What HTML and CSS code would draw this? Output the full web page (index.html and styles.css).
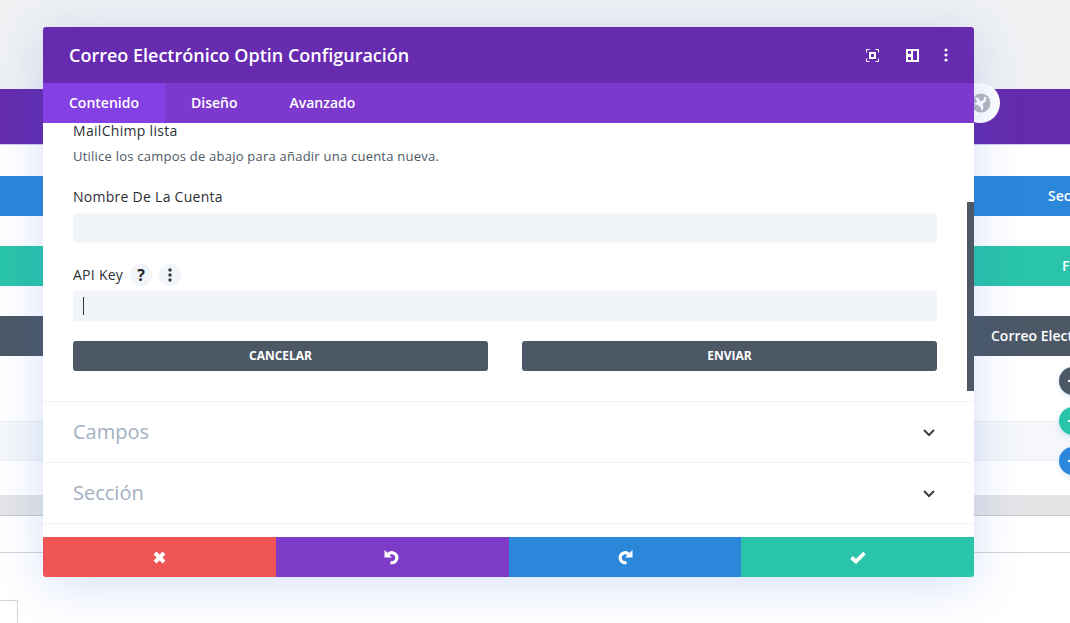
FILE: index.html
```html
<!DOCTYPE html>
<html lang="es">
<head>
  <meta charset="UTF-8" />
  <meta name="viewport" content="width=device-width, initial-scale=1.0" />
  <title>Correo Electrónico Optin Configuración</title>
  <link rel="stylesheet" href="styles.css">
</head>
<body>
  <!-- builder page behind the modal -->
  <div class="page">
    <div class="page-top"></div>
    <div class="bar bar-purple"></div>
    <div class="bar bar-blue">Sección</div>
    <div class="bar bar-teal">Fila</div>
    <div class="bar bar-dark">Correo Electrónico Optin</div>
    <div class="page-rows">
      <div class="page-band"></div>
    </div>
    <div class="page-foot"></div>
    <div class="page-white"></div>
    <div class="page-box"></div>
  </div>

  <div class="globe-btn">
    <svg width="20" height="20" viewBox="0 0 20 20">
      <circle cx="10" cy="10" r="9.500" fill="#b8b8be" />
      <path d="M4 3.500l4 2 1.500 3 3-1.500 1-3.500 2 1-1 4-3 2.500 1 4-2 3-1-4-3-2-3.500-1 3-2z" fill="#fff" />
    </svg>
  </div>
  <div class="page-dot dot-dark"></div>
  <div class="page-dot dot-teal"></div>
  <div class="page-dot dot-blue"></div>

  <div class="modal">
    <header class="modal-head">
      <h2>Correo Electrónico Optin Configuración</h2>
      <div class="head-icons">
        <svg class="icon-focus" width="13" height="13" viewBox="0 0 13 13" fill="none" stroke="#fff">
          <path d="M.5 3.500V.5h3M9.500 .5h3v3M12.500 9.500v3h-3M3.500 12.500h-3v-3" />
          <rect x="4" y="4" width="5" height="5" stroke-width="2" />
        </svg>
        <svg class="icon-side" width="13" height="13" viewBox="0 0 13 13">
          <path fill="#fff" fill-rule="evenodd" d="M0 0h13v13H0zM2 2v3h3V2zM2 8v3h3V8zM7 2v9h4V2z" />
        </svg>
        <svg class="icon-more" width="4" height="14" viewBox="0 0 4 14" fill="#fff">
          <circle cx="2" cy="2" r="1.600" />
          <circle cx="2" cy="7" r="1.600" />
          <circle cx="2" cy="12" r="1.600" />
        </svg>
      </div>
    </header>

    <nav class="tabs">
      <a class="tab active">Contenido</a>
      <a class="tab">Diseño</a>
      <a class="tab">Avanzado</a>
    </nav>

    <div class="modal-body">
      <div class="scrollbar"></div>
      <div class="account-form">
        <div class="field-title">MailChimp lista</div>
        <p class="field-desc">Utilice los campos de abajo para añadir una cuenta nueva.</p>

        <label class="field-label">Nombre De La Cuenta</label>
        <div class="text-field"></div>

        <div class="api-label">
          <label class="field-label">API Key</label>
          <span class="mini-btn">?</span>
          <span class="mini-btn">
            <svg width="4" height="14" viewBox="0 0 4 14" fill="#32373c">
              <circle cx="2" cy="2" r="1.700" />
              <circle cx="2" cy="7" r="1.700" />
              <circle cx="2" cy="12" r="1.700" />
            </svg>
          </span>
        </div>
        <div class="text-field"><span class="caret"></span></div>

        <div class="form-buttons">
          <button type="button">CANCELAR</button>
          <button type="button">ENVIAR</button>
        </div>
      </div>

      <div class="toggle">
        <span>Campos</span>
        <svg width="12" height="8" viewBox="0 0 12 8" fill="none" stroke="#3a4048" stroke-width="2"><path d="M1 1l5 5 5-5" /></svg>
      </div>
      <div class="toggle">
        <span>Sección</span>
        <svg width="12" height="8" viewBox="0 0 12 8" fill="none" stroke="#3a4048" stroke-width="2"><path d="M1 1l5 5 5-5" /></svg>
      </div>
    </div>

    <footer class="modal-foot">
      <button type="button" class="foot-btn red">
        <svg width="13" height="13" viewBox="0 0 13 13" fill="none" stroke="#fff" stroke-width="4"><path d="M2 2l9 9M11 2l-9 9" /></svg>
      </button>
      <button type="button" class="foot-btn purple">
        <svg width="16" height="16" viewBox="0 0 16 16">
          <path d="M4.500 5A5 5 0 1 1 6.500 13.500" fill="none" stroke="#fff" stroke-width="3.200" />
          <path d="M.5 1v7.500H8z" fill="#fff" />
        </svg>
      </button>
      <button type="button" class="foot-btn blue">
        <svg width="16" height="16" viewBox="0 0 16 16">
          <path d="M11.500 5A5 5 0 1 0 9.500 13.500" fill="none" stroke="#fff" stroke-width="3.200" />
          <path d="M15.500 1v7.500H8z" fill="#fff" />
        </svg>
      </button>
      <button type="button" class="foot-btn teal">
        <svg width="16" height="13" viewBox="0 0 16 13" fill="none" stroke="#fff" stroke-width="3.800"><path d="M1.500 6.500l4.500 4 8.500-8.500" /></svg>
      </button>
    </footer>
  </div>
</body>
</html>
```

FILE: styles.css
```css
* {
  box-sizing: border-box;
}

html, body {
  height: 100%;
}

body {
  margin: 0;
  overflow: hidden;
  background-color: #fff;
  font-family: 'Open Sans', 'Liberation Sans', sans-serif;
  color: #2b3036;
}

/* page behind */
.page {
  height: 623px;
  position: relative;
  overflow: hidden;
}

.page-top {
  height: 89px;
  background-color: #eff1f3;
}

.bar {
  height: 40px;
  margin-top: 30px;
  line-height: 40px;
  color: #fff;
  font-size: 14px;
  font-weight: 600;
  white-space: nowrap;
  overflow: hidden;
}

.bar-purple {
  height: 56px;
  margin-top: 0;
  background-color: #652bae;
  border-bottom: 1px solid #d9c9ee;
}

.bar-blue {
  margin-top: 31px;
  background-color: #2b87da;
  padding-left: 1048px;
}

.bar-teal {
  background-color: #29c4a9;
  padding-left: 1062px;
}

.bar-dark {
  background-color: #4c5866;
  padding-left: 991px;
}

.page-rows {
  height: 139px;
  padding-top: 65px;
}

.page-band {
  height: 40px;
  background-color: #f5f7fa;
  border-top: 1px solid #eceff3;
  border-bottom: 1px solid #eceff3;
}

.page-foot {
  height: 21px;
  background-color: #e4e5e7;
  border-bottom: 1px solid #c9cacd;
}

.page-white {
  height: 37px;
  border-bottom: 1px solid #d3d4d7;
}

.page-box {
  width: 18px;
  height: 24px;
  margin-top: 47px;
  border: 1px solid #d3d4d7;
  border-left: 0;
}

.globe-btn {
  position: absolute;
  left: 960px;
  top: 83px;
  width: 40px;
  height: 40px;
  border-radius: 50%;
  background-color: #fff;
  display: flex;
  align-items: center;
  justify-content: center;
  padding-left: 1px;
}

.page-dot {
  position: absolute;
  left: 1059px;
  width: 28px;
  height: 28px;
  border-radius: 50%;
  box-shadow: 0 2px 6px rgba(43, 135, 218, 0.2);
}

/* start of the plus sign, the rest is past the window edge */
.page-dot::after {
  content: "";
  position: absolute;
  left: 9px;
  top: 13px;
  width: 10px;
  height: 2px;
  background-color: #fff;
}

.dot-dark {
  top: 367px;
  background-color: #4c5866;
}

.dot-teal {
  top: 407px;
  background-color: #29c4a9;
}

.dot-blue {
  top: 447px;
  background-color: #2b87da;
}

/* modal */
.modal {
  position: absolute;
  left: 43px;
  top: 27px;
  width: 931px;
  height: 550px;
  display: flex;
  flex-direction: column;
  background-color: #fff;
  border-radius: 3px;
  box-shadow: 0 8px 50px rgba(43, 100, 218, 0.2);
}

.modal-head {
  height: 56px;
  flex: none;
  display: flex;
  align-items: center;
  justify-content: space-between;
  padding: 0 26px;
  background-color: #672bb0;
  border-radius: 3px 3px 0 0;
  color: #fff;
}

.modal-head h2 {
  margin: 0;
  font-size: 18px;
  font-weight: 600;
}

.head-icons {
  display: flex;
  align-items: center;
}

.icon-side {
  margin-left: 27px;
}

.icon-more {
  margin-left: 25px;
}

.tabs {
  height: 40px;
  flex: none;
  display: flex;
  background-color: #7d39cd;
}

.tab {
  padding: 0 26px;
  line-height: 40px;
  color: #fff;
  font-size: 14px;
  font-weight: 600;
}

.tab.active {
  background-color: #8540e3;
}

.modal-body {
  height: 414px;
  flex: none;
  position: relative;
  overflow: hidden;
}

.scrollbar {
  position: absolute;
  right: 0;
  top: 79px;
  width: 7px;
  height: 189px;
  background-color: #4c5866;
}

.account-form {
  height: 279px;
  padding: 0 37px 0 30px;
  border-bottom: 1px solid #f1f3f6;
}

.field-title {
  font-size: 14px;
  letter-spacing: 0.3px;
  line-height: 16px;
}

.field-desc {
  margin: 8px 0 22px;
  font-size: 13px;
  letter-spacing: 0.23px;
  line-height: 18px;
  color: #4c5866;
}

.field-label {
  display: block;
  font-size: 14px;
  letter-spacing: 0.27px;
  line-height: 20px;
}

.text-field {
  height: 30px;
  margin-top: 6px;
  padding: 6px 10px;
  background-color: #f1f5f9;
  border-radius: 3px;
}

.caret {
  display: block;
  width: 1px;
  height: 18px;
  background-color: #32373c;
}

.api-label {
  display: flex;
  align-items: center;
  gap: 7px;
  height: 20px;
  margin-top: 22px;
}

.mini-btn {
  width: 22px;
  height: 22px;
  flex: none;
  border-radius: 50%;
  background-color: #f1f5f9;
  display: flex;
  align-items: center;
  justify-content: center;
  font-size: 16px;
  font-weight: 700;
  color: #23272b;
}

.form-buttons {
  display: flex;
  justify-content: space-between;
  margin-top: 20px;
}

.form-buttons button {
  width: 415px;
  height: 30px;
  padding: 0 0 2px;
  border: none;
  border-radius: 3px;
  background-color: #4c5866;
  color: #fff;
  font-family: inherit;
  font-size: 12px;
  font-weight: 700;
}

.toggle {
  height: 61px;
  display: flex;
  align-items: center;
  justify-content: space-between;
  padding: 0 39px 0 30px;
  border-bottom: 1px solid #f1f3f6;
  font-size: 20px;
  color: #a3b0c2;
}

.toggle span {
  margin-bottom: 2px;
}

.toggle svg {
  margin-top: 2px;
}

.modal-foot {
  height: 40px;
  flex: none;
  display: flex;
  border-radius: 0 0 3px 3px;
  overflow: hidden;
}

.foot-btn {
  flex: 1;
  border: none;
  padding: 0;
  display: flex;
  align-items: center;
  justify-content: center;
}

.foot-btn.red {
  background-color: #ef5555;
}

.foot-btn.purple {
  background-color: #7e3bc8;
}

.foot-btn.blue {
  background-color: #2b87da;
}

.foot-btn.teal {
  background-color: #29c4a9;
}
```
